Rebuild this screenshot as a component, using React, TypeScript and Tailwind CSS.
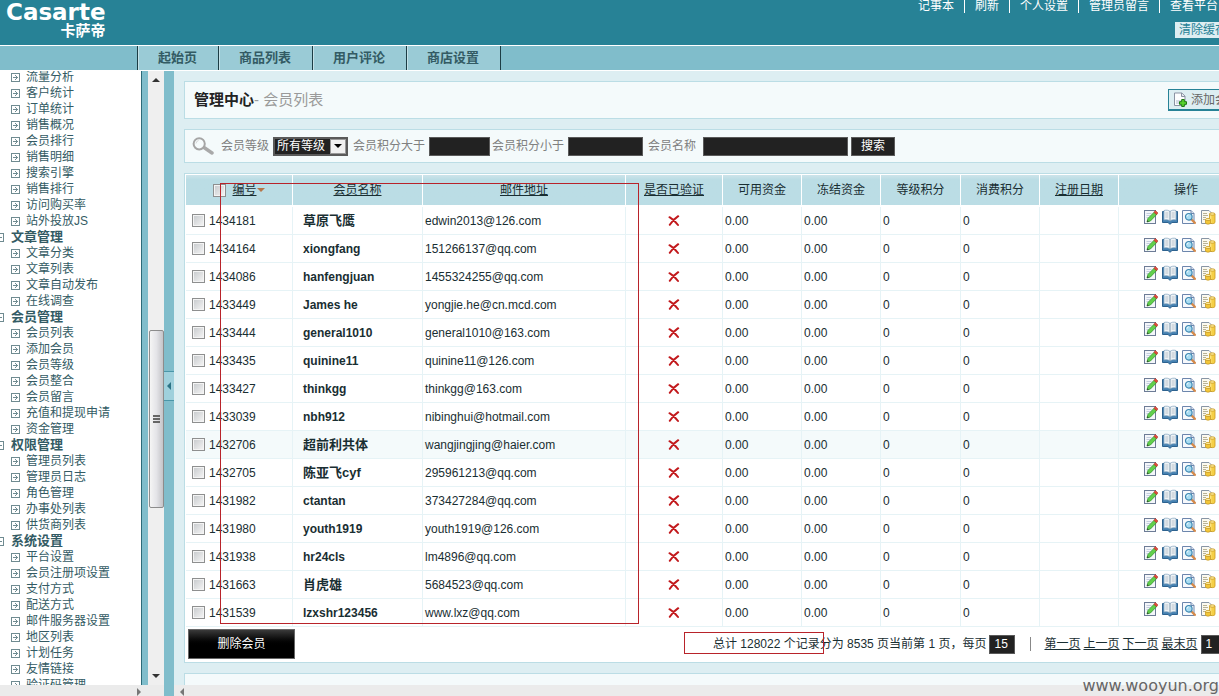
import React, { useState } from "react";

type MenuGroup = { title?: string; items: string[] };

const MENU: MenuGroup[] = [
    { items: ["流量分析", "客户统计", "订单统计", "销售概况", "会员排行", "销售明细", "搜索引擎", "销售排行", "访问购买率", "站外投放JS"] },
    { title: "文章管理", items: ["文章分类", "文章列表", "文章自动发布", "在线调查"] },
    { title: "会员管理", items: ["会员列表", "添加会员", "会员等级", "会员整合", "会员留言", "充值和提现申请", "资金管理"] },
    { title: "权限管理", items: ["管理员列表", "管理员日志", "角色管理", "办事处列表", "供货商列表"] },
    { title: "系统设置", items: ["平台设置", "会员注册项设置", "支付方式", "配送方式", "邮件服务器设置", "地区列表", "计划任务", "友情链接", "验证码管理"] },
];

const USERS = [
    { id: "1434181", name: "草原飞鹰", email: "edwin2013@126.com" },
    { id: "1434164", name: "xiongfang", email: "151266137@qq.com" },
    { id: "1434086", name: "hanfengjuan", email: "1455324255@qq.com" },
    { id: "1433449", name: "James he", email: "yongjie.he@cn.mcd.com" },
    { id: "1433444", name: "general1010", email: "general1010@163.com" },
    { id: "1433435", name: "quinine11", email: "quinine11@126.com" },
    { id: "1433427", name: "thinkgg", email: "thinkgg@163.com" },
    { id: "1433039", name: "nbh912", email: "nibinghui@hotmail.com" },
    { id: "1432706", name: "超前利共体", email: "wangjingjing@haier.com" },
    { id: "1432705", name: "陈亚飞cyf", email: "295961213@qq.com" },
    { id: "1431982", name: "ctantan", email: "373427284@qq.com" },
    { id: "1431980", name: "youth1919", email: "youth1919@126.com" },
    { id: "1431938", name: "hr24cls", email: "lm4896@qq.com" },
    { id: "1431663", name: "肖虎雄", email: "5684523@qq.com" },
    { id: "1431539", name: "lzxshr123456", email: "www.lxz@qq.com" },
];

const TOP_LINKS = ["记事本", "刷新", "个人设置", "管理员留言", "查看平台"];
const TABS = ["起始页", "商品列表", "用户评论", "商店设置"];

const isCjk = (s: string) => /[\u4e00-\u9fff]/.test(s);

const ItemIcon = () => (
    <svg width="9" height="9" viewBox="0 0 9 9" className="shrink-0" shapeRendering="crispEdges">
        <rect x="0.5" y="0.5" width="8" height="8" fill="#fff" stroke="#6f8b91" />
        <path d="M2 4.5h5M5.5 3v3M4.5 2v1M4.5 6v1" stroke="#6f8b91" />
    </svg>
);

const MinusIcon = () => (
    <svg width="9" height="9" viewBox="0 0 9 9" className="shrink-0" shapeRendering="crispEdges">
        <rect x="0.5" y="0.5" width="8" height="8" fill="#fff" stroke="#6f8b91" />
        <path d="M2 4.5h5" stroke="#6f8b91" />
    </svg>
);

const Arrow: React.FC<{ dir: "up" | "down" | "left" | "right"; color?: string }> = ({ dir, color = "#333" }) => {
    const d = { up: "M0 6L4 2L8 6Z", down: "M0 2L4 6L8 2Z", left: "M6 0L2 4L6 8Z", right: "M2 0L6 4L2 8Z" }[dir];
    return <svg width="8" height="8" viewBox="0 0 8 8" className="shrink-0"><path d={d} fill={color} /></svg>;
};

const SearchIcon = () => (
    <svg width="22" height="18" viewBox="0 0 22 18" className="shrink-0">
        <path d="M12 10.5L20 16" stroke="#a9a9a9" strokeWidth="3.4" strokeLinecap="round" />
        <circle cx="7.2" cy="6.8" r="5.6" fill="#f6fbfc" stroke="#a5a5a5" strokeWidth="2" />
        <path d="M4 6.5a3.4 3.4 0 0 1 2.6-3" stroke="#d5d5d5" fill="none" />
    </svg>
);

const EditIcon = () => (
    <svg width="16" height="16" viewBox="0 0 16 16">
        <rect x="1.5" y="1.5" width="11" height="13" fill="#f4f6fa" stroke="#6d7c96" />
        <path d="M3.5 4.5h5M3.5 6.5h4M3.5 8.5h2" stroke="#c3cddd" />
        <path d="M4 13l1-3.6 6.2-6.2 2.4 2.4L7.4 12z" fill="#62d04b" stroke="#2f9527" strokeWidth="0.8" />
        <path d="M10.800 3.200l1.600-1.800 2.600 2.600-1.600 1.800z" fill="#e04b3a" stroke="#9c2c22" strokeWidth="0.5" />
        <path d="M4 13l.5-1.800 1.300 1.300z" fill="#333" />
    </svg>
);

const BookIcon = () => (
    <svg width="16" height="16" viewBox="0 0 16 16">
        <path d="M0.500 2.500h15v11h-5.500l-2 1.800-2-1.800H0.500z" fill="#4682b2" stroke="#2d628f" />
        <path d="M2 1.500c2.500-.7 4.500-.3 6 .9 1.500-1.200 3.500-1.600 6-.9v9.500c-2.500-.6-4.500-.2-6 1-1.500-1.200-3.500-1.600-6-1z" fill="#eef3f6" stroke="#7fa0bb" strokeWidth="0.7" />
        <path d="M8 2.500V12" stroke="#7894aa" />
        <path d="M3.300 4h3M3.300 6h3M3.300 8h3M9.700 4h3M9.700 6h3M9.700 8h3" stroke="#b3bec7" strokeWidth="0.9" />
    </svg>
);

const ViewIcon = () => (
    <svg width="16" height="16" viewBox="0 0 16 16">
        <path d="M1.5 1.5h8.5l3 3v10H1.5z" fill="#f7f9fc" stroke="#6c86ad" />
        <path d="M10 1.5v3h3" fill="#dbe4f0" stroke="#6c86ad" />
        <path d="M10.3 10.3l3.6 3.6" stroke="#d58a4a" strokeWidth="2.2" strokeLinecap="round" />
        <circle cx="7.8" cy="7.8" r="3.3" fill="#a8dcf2" stroke="#3d86b0" strokeWidth="1.2" />
        <path d="M6 7.5a2 2 0 0 1 1.5-1.6" stroke="#fff" fill="none" />
    </svg>
);

const AccountIcon = () => (
    <svg width="16" height="16" viewBox="0 0 16 16">
        <path d="M1.5 1.5h7.5l3 3v10H1.5z" fill="#fbf9ef" stroke="#8795a5" />
        <path d="M3 4.5h4M3 6.5h5M3 8.5h3M3 10.5h2" stroke="#b9b395" />
        <path d="M9.500 5v8.500c0 1.500 5.500 1.500 5.500 0V5z" fill="#f5cf46" stroke="#c99a22" strokeWidth="0.8" />
        <path d="M10.800 6v8" stroke="#fdeb9a" />
        <ellipse cx="12.2" cy="5" rx="2.8" ry="1.2" fill="#fdeb9a" stroke="#c99a22" strokeWidth="0.8" />
        <path d="M5.500 10.500v3.500c0 1.500 5 1.500 5 0v-3.500z" fill="#f2c638" stroke="#c99a22" strokeWidth="0.8" />
        <ellipse cx="8" cy="10.500" rx="2.500" ry="1.100" fill="#fdeb9a" stroke="#c99a22" strokeWidth="0.8" />
    </svg>
);

const AddIcon = () => (
    <svg width="14" height="15" viewBox="0 0 14 15" className="shrink-0">
        <path d="M1.5 1h7.5l3 3v9.5H1.5z" fill="#fdfdfe" stroke="#8b93a3" />
        <path d="M3 8h7v4H3z" fill="#d6dbe6" />
        <path d="M8.5 1v3.5H12" fill="#e3e7ee" stroke="#8b93a3" />
        <path d="M8.7 7.5h2.6v2.2h2.2v2.6h-2.2v2.2H8.7v-2.2H6.5V9.7h2.2z" fill="#59d22f" stroke="#1d7a12" />
    </svg>
);

const NoIcon = () => (
    <svg width="12" height="12" viewBox="0 0 12 12" className="mx-auto">
        <path d="M1.500 2.200C4 3.600 7.500 6.800 10 10M10.200 1.200C7.500 3 4 6.500 1.800 9.800" stroke="#c2191c" strokeWidth="2" strokeLinecap="round" fill="none" />
    </svg>
);

const ACTIONS = [
    { label: "编辑", Icon: EditIcon },
    { label: "收货地址", Icon: BookIcon },
    { label: "查看订单", Icon: ViewIcon },
    { label: "查看账目明细", Icon: AccountIcon },
];

const checkboxCls = "size-[13px] shrink-0 appearance-none border border-[#8e8f8f] bg-linear-to-br from-[#c6c9cc] to-[#f6f6f6] shadow-[inset_0_0_0_1px_#f4f4f4] checked:bg-[#278296]";
const darkField = "h-[19px] border border-[#5a5a5a] bg-[#222] px-1 text-[12px] text-white outline-none";
const thCls = "h-[30px] border-r border-white bg-linear-to-b from-[#cde4ea] to-[#bbdde5] to-15% p-0 text-center font-normal";
const tdCls = "h-7 border-r border-b border-[#e6f3f6] p-0 last:border-r-0";

const Sidebar: React.FC = () => (
    <div className="flex w-[164px] shrink-0 flex-col">
        <div className="flex min-h-0 flex-1">
            <nav className="min-w-0 flex-1 overflow-hidden border-r border-[#2c6a78] bg-white">
                <ul className="-mt-0.5 pl-[11px] text-[12px] leading-4 text-[#335b64]">
                    {MENU.map((group, gi) => (
                        <React.Fragment key={gi}>
                            {group.title && (
                                <li className="-ml-4 flex items-center gap-[7px] text-[13px] font-bold">
                                    <MinusIcon />{group.title}
                                </li>
                            )}
                            {group.items.map(item => (
                                <li key={item} className="flex items-center gap-1.5 whitespace-nowrap">
                                    <ItemIcon /><a href="#">{item}</a>
                                </li>
                            ))}
                        </React.Fragment>
                    ))}
                </ul>
            </nav>
            <div className="w-1.5 bg-[#80bdcb]" />
            <div className="flex w-4 flex-col items-center bg-[#efefef]">
                <div className="flex h-[17px] items-center"><Arrow dir="up" /></div>
                <div className="grow-[243] basis-0" />
                <div className="flex w-[15px] grow-[176] basis-0 flex-col items-center justify-center gap-px rounded-xs border border-[#8c8c8c] bg-linear-to-r from-[#f5f5f5] via-[#e4e4e8] to-[#c4c4c8]">
                    <span className="h-0.5 w-[7px] bg-[#666]" />
                    <span className="h-0.5 w-[7px] bg-[#666]" />
                    <span className="h-0.5 w-[7px] bg-[#666]" />
                </div>
                <div className="grow-[161] basis-0" />
                <div className="flex h-[17px] items-center"><Arrow dir="down" /></div>
            </div>
        </div>
        <div className="flex h-[11px] items-end justify-end bg-[#ebebeb] pr-[21px]"><Arrow dir="right" color="#777" /></div>
    </div>
);

const SearchBar: React.FC = () => (
    <form className="flex h-[34px] items-center border border-[#bbdde5] bg-[#f4fafb] pl-[7px] text-[#808080]" onSubmit={e => e.preventDefault()}>
        <SearchIcon />
        <label htmlFor="rank" className="ml-[7px]">会员等级</label>
        <div className="relative ml-1 h-[19px] w-[75px]">
            <select id="rank" className="h-full w-full appearance-none border-2 border-[#5a5a5a] bg-[#222] pl-0.5 text-[12px] leading-[15px] text-white">
                <option>所有等级</option>
            </select>
            <span className="pointer-events-none absolute inset-y-0.5 right-0.5 flex w-4 items-center justify-center border border-[#999] bg-[#f0f0f0]">
                <Arrow dir="down" color="#000" />
            </span>
        </div>
        <label htmlFor="min" className="ml-[5px]">会员积分大于</label>
        <input id="min" className={`${darkField} ml-1 w-[61px]`} />
        <label htmlFor="max" className="ml-0.5">会员积分小于</label>
        <input id="max" className={`${darkField} ml-1 w-[75px]`} />
        <label htmlFor="keyword" className="ml-[5px]">会员名称</label>
        <input id="keyword" className={`${darkField} ml-[7px] w-[145px]`} />
        <button type="submit" className="ml-[3px] h-[19px] w-11 border border-[#5a5a5a] bg-[#222] leading-4 text-white">搜索</button>
    </form>
);

const UserTable: React.FC = () => {
    const [selected, setSelected] = useState<string[]>([]);
    const toggle = (id: string) => setSelected(s => s.includes(id) ? s.filter(x => x !== id) : [...s, id]);

    return (
        <section className="relative border border-[#bbdde5] bg-white p-px text-[#192e32]">
            <table className="w-full table-fixed border-separate border-spacing-0">
                <colgroup>
                    <col className="w-[107px]" />
                    <col className="w-[130px]" />
                    <col className="w-[203px]" />
                    <col className="w-[97px]" />
                    <col className="w-[79px]" />
                    <col className="w-[79px]" />
                    <col className="w-[80px]" />
                    <col className="w-[79px]" />
                    <col className="w-[79px]" />
                    <col />
                </colgroup>
                <thead>
                    <tr>
                        <th className={thCls}>
                            <div className="flex items-center justify-center">
                                <input type="checkbox" aria-label="全选" className={checkboxCls}
                                    checked={selected.length === USERS.length}
                                    onChange={e => setSelected(e.target.checked ? USERS.map(u => u.id) : [])} />
                                <a href="#" className="ml-1.5 underline">编号</a>
                                <Arrow dir="down" color="#b5764a" />
                            </div>
                        </th>
                        <th className={thCls}><a href="#" className="underline">会员名称</a></th>
                        <th className={thCls}><a href="#" className="underline">邮件地址</a></th>
                        <th className={thCls}><a href="#" className="underline">是否已验证</a></th>
                        <th className={thCls}>可用资金</th>
                        <th className={thCls}>冻结资金</th>
                        <th className={thCls}>等级积分</th>
                        <th className={thCls}>消费积分</th>
                        <th className={thCls}><a href="#" className="underline">注册日期</a></th>
                        <th className={thCls}>操作</th>
                    </tr>
                </thead>
                <tbody className="before:block before:h-0.5">
                    {USERS.map(u => (
                        <tr key={u.id} className={u.id === "1432706" ? "bg-[#f4fafb]" : "hover:bg-[#f4fafb]"}>
                            <td className={tdCls}>
                                <label className="flex items-center gap-1 pl-1.5">
                                    <input type="checkbox" className={checkboxCls} checked={selected.includes(u.id)} onChange={() => toggle(u.id)} />
                                    {u.id}
                                </label>
                            </td>
                            <td className={`${tdCls} font-bold`}>
                                <span className={isCjk(u.name) ? "pl-2.5 text-[13px]" : "pl-2.5"}>{u.name}</span>
                            </td>
                            <td className={tdCls}><span className="pl-0.5">{u.email}</span></td>
                            <td className={tdCls}><NoIcon /></td>
                            <td className={tdCls}><span className="pl-0.5">0.00</span></td>
                            <td className={tdCls}><span className="pl-0.5">0.00</span></td>
                            <td className={tdCls}><span className="pl-0.5">0</span></td>
                            <td className={tdCls}><span className="pl-0.5">0</span></td>
                            <td className={tdCls}></td>
                            <td className={`${tdCls} align-top`}>
                                <div className="flex gap-[3px] pt-0.5 pl-6">
                                    {ACTIONS.map(({ label, Icon }) => (
                                        <a key={label} href="#" aria-label={label}><Icon /></a>
                                    ))}
                                </div>
                            </td>
                        </tr>
                    ))}
                </tbody>
            </table>
            <div className="flex h-[34px] items-center pl-0.5">
                <button className="h-[30px] w-[107px] border border-[#666] bg-linear-to-b from-[#3a3a3a] to-black to-60% text-white">删除会员</button>
                <div className="ml-[418px] flex items-center gap-[3px] whitespace-nowrap">
                    <span>总计 <span>128022</span> 个记录分为 <span>8535</span> 页当前第 <span>1</span> 页，每页</span>
                    <input aria-label="每页" defaultValue="15" className={`${darkField} w-[26px]`} />
                    <span className="mr-2.5 ml-3 h-3.5 w-px bg-[#888]" />
                    <a href="#" className="underline">第一页</a>
                    <a href="#" className="underline">上一页</a>
                    <a href="#" className="underline">下一页</a>
                    <a href="#" className="underline">最末页</a>
                    <select aria-label="页码" className={`${darkField} w-10 appearance-none`}>
                        <option>1</option>
                    </select>
                </div>
            </div>
            {/* highlight frames */}
            <div className="pointer-events-none absolute top-[9px] left-[35px] h-[441px] w-[419px] border border-[#b8232a]" />
            <div className="pointer-events-none absolute top-[458px] left-[499px] h-[22px] w-[140px] border border-[#b8232a]" />
        </section>
    );
};

export default function App() {
    return (
        <div className="relative flex h-screen flex-col overflow-hidden bg-[#ddeef2] font-['Liberation_Sans','Noto_Sans_CJK_SC',sans-serif] text-[12px] leading-4">
            <header className="flex h-[46px] shrink-0 justify-between border-b border-white bg-[#278296] text-white">
                <div className="flex flex-col items-end pt-px pl-1.5 font-bold">
                    <span className="font-['DejaVu_Sans',sans-serif] text-[23px] leading-[22px]">Casarte</span>
                    <span className="text-[15px] leading-4">卡萨帝</span>
                </div>
                <div className="flex flex-col items-end gap-2">
                    <nav className="-mt-0.5 flex items-center pr-px">
                        {TOP_LINKS.map((t, i) => (
                            <React.Fragment key={t}>
                                {i > 0 && <span className="mx-2.5 h-3.5 w-px bg-white" />}
                                <a href="#">{t}</a>
                            </React.Fragment>
                        ))}
                    </nav>
                    <button className="-mr-3 h-4 bg-[#ddeef2] px-1 leading-4 whitespace-nowrap text-[#278296]">清除缓存</button>
                </div>
            </header>

            <nav className="flex h-[25px] shrink-0 border-b border-white bg-[#80bdcb] pl-[137px] text-[13px] font-bold text-[#335b64]">
                {TABS.map(t => (
                    <a key={t} href="#" className="flex items-center border-l border-[#1c3d45] bg-[#9acbd6] pr-[21px] pl-5 shadow-[inset_1px_0_0_#c4e2e8] last:border-r">{t}</a>
                ))}
            </nav>

            <div className="flex min-h-0 flex-1">
                <Sidebar />
                <div className="flex w-2.5 shrink-0 items-center bg-[#80bdcb] pt-1">
                    <button aria-label="收起菜单" className="flex h-[30px] w-full items-center justify-center border-y border-[#4a96a8] bg-[#9fd0dc]">
                        <Arrow dir="left" color="#2c7385" />
                    </button>
                </div>
                <div className="flex min-w-0 flex-1 flex-col">
                    <main className="min-h-0 flex-1 overflow-hidden pt-2.5 pl-2.5">
                        <div className="flex min-w-[1072px] flex-col gap-2.5">
                            <div className="flex h-[38px] items-center justify-between border border-[#bbdde5] bg-[#f4fafb] pr-[7px] pl-[9px]">
                                <h1 className="text-[15px] leading-5 text-[#9a9a9a]">
                                    <a href="#" className="font-bold text-[#222]">管理中心</a>- 会员列表
                                </h1>
                                <a href="#" className="flex h-[22px] w-20 items-center gap-1 border border-b-2 border-[#278296] bg-[#ddeef2] pl-1 whitespace-nowrap text-[#666]">
                                    <AddIcon />添加会员
                                </a>
                            </div>
                            <SearchBar />
                            <UserTable />
                            <div className="h-10 border border-[#bbdde5] bg-[#f4fafb]" />
                        </div>
                    </main>
                    <div className="flex h-[11px] shrink-0 items-end bg-[#ebebeb] pl-1"><Arrow dir="left" color="#777" /></div>
                </div>
            </div>

            <span className="absolute right-0 bottom-0 font-['DejaVu_Sans',sans-serif] text-[16px] leading-5 text-[#666]">www.wooyun.org</span>
        </div>
    );
}
